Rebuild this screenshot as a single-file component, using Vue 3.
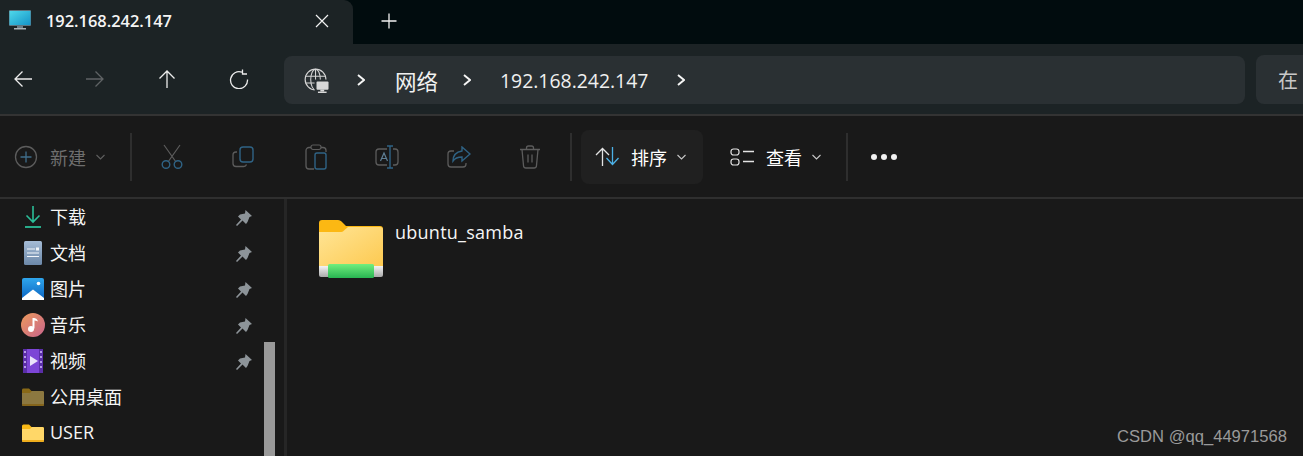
<script setup>
const items = [
  { name: '下载', icon: 'dl', pin: true },
  { name: '文档', icon: 'doc', pin: true },
  { name: '图片', icon: 'pic', pin: true },
  { name: '音乐', icon: 'music', pin: true },
  { name: '视频', icon: 'video', pin: true },
  { name: '公用桌面', icon: 'dim', pin: false },
  { name: 'USER', icon: 'folder', pin: false },
]
</script>

<template>
  <div class="win">
    <div class="tabstrip">
      <div class="tab">
        <svg class="pc" width="24" height="20" viewBox="0 0 24 20">
          <defs><linearGradient id="scr" x1="0" y1="0" x2="1" y2="1"><stop offset="0" stop-color="#4fd8ea"/><stop offset="1" stop-color="#1494c8"/></linearGradient></defs>
          <rect x="1" y="0" width="22" height="16" rx="1" fill="#5d7480"/>
          <rect x="1.500" y="1" width="21" height="14" fill="url(#scr)"/>
          <rect x="9" y="16" width="6" height="2" fill="#6b7c85"/>
          <rect x="6" y="18" width="12" height="1.500" fill="#a9b3b8"/>
        </svg>
        <span class="tabtitle">192.168.242.147</span>
        <svg class="tabx" width="14" height="14" viewBox="0 0 14 14"><path d="M1 1l12 12M13 1L1 13" stroke="#f2f2f2" stroke-width="1.200" fill="none"/></svg>
      </div>
      <svg class="plus" width="16" height="16" viewBox="0 0 16 16"><path d="M8 .5v15M.5 8h15" stroke="#f2f2f2" stroke-width="1.300" fill="none"/></svg>
    </div>

    <div class="navbar">
      <div class="navbtns">
        <svg width="20" height="20" viewBox="0 0 20 20"><path d="M19 10H2M9.500 2.500L2 10l7.500 7.500" stroke="#ececec" stroke-width="1.300" fill="none"/></svg>
        <svg width="20" height="20" viewBox="0 0 20 20"><path d="M1 10h17M10.500 2.500L18 10l-7.500 7.500" stroke="#5f6365" stroke-width="1.300" fill="none"/></svg>
        <svg width="20" height="20" viewBox="0 0 20 20"><path d="M10 19V2M2.500 9.500L10 2l7.500 7.500" stroke="#ececec" stroke-width="1.300" fill="none"/></svg>
        <svg width="20" height="20" viewBox="0 0 20 20"><path d="M13 3.200A8.500 8.500 0 1 0 18.500 10.500" stroke="#ececec" stroke-width="1.300" fill="none"/><path d="M13.500 .5v4.500h4.500" stroke="#ececec" stroke-width="1.300" fill="none"/></svg>
      </div>
      <div class="address">
        <svg class="globe" width="25" height="25" viewBox="0 0 26 26">
          <circle cx="12" cy="12" r="10.800" stroke="#d5d5d5" stroke-width="1.200" fill="none"/>
          <ellipse cx="12" cy="12" rx="5" ry="10.800" stroke="#d5d5d5" stroke-width="1.100" fill="none"/>
          <path d="M1.500 8.500h21M1.500 15.500h21M12 1v22" stroke="#d5d5d5" stroke-width="1.100" fill="none"/>
          <rect x="11" y="12" width="15" height="14" fill="#2a3033"/>
          <rect x="13" y="14" width="12.500" height="8.500" rx="1" fill="#d8d8d8"/>
          <rect x="17" y="22.500" width="4" height="2" fill="#d8d8d8"/>
          <rect x="14.500" y="24.500" width="9" height="1.500" fill="#d8d8d8"/>
        </svg>
        <svg class="chev first" width="8" height="12" viewBox="0 0 8 12"><path d="M1 1l6 5-6 5" stroke="#f5f5f5" stroke-width="1.900" fill="none"/></svg>
        <span class="net">网络</span>
        <svg class="chev" width="8" height="12" viewBox="0 0 8 12"><path d="M1 1l6 5-6 5" stroke="#f5f5f5" stroke-width="1.900" fill="none"/></svg>
        <span class="ip">192.168.242.147</span>
        <svg class="chev" width="8" height="12" viewBox="0 0 8 12"><path d="M1 1l6 5-6 5" stroke="#f5f5f5" stroke-width="1.900" fill="none"/></svg>
      </div>
      <div class="search">在</div>
    </div>

    <div class="toolbar">
      <div class="tnew">
        <svg width="24" height="24" viewBox="0 0 24 24"><circle cx="12" cy="12" r="10.500" stroke="#5c5c5c" stroke-width="1.300" fill="none"/><path d="M12 6.500v11M6.500 12h11" stroke="#3f6d8a" stroke-width="1.300" fill="none"/></svg>
        <span class="lbl dim">新建</span>
        <svg class="caret" width="9" height="6" viewBox="0 0 9 6"><path d="M.5 1l4 4 4-4" stroke="#5f5f5f" stroke-width="1.100" fill="none"/></svg>
      </div>
      <i class="sep"></i>
      <div class="actions">
        <svg width="22" height="26" viewBox="0 0 22 26"><path d="M3 1l12 17M19 1L7 18" stroke="#5c5c5c" stroke-width="1.200" fill="none"/><circle cx="5" cy="20.500" r="3.800" stroke="#2f6385" stroke-width="1.400" fill="none"/><circle cx="17" cy="20.500" r="3.800" stroke="#2f6385" stroke-width="1.400" fill="none"/></svg>
        <svg width="22" height="22" viewBox="0 0 22 22"><path d="M5 6H4a3 3 0 0 0-3 3v8.500a3 3 0 0 0 3 3h7.500a3 3 0 0 0 3-2" stroke="#5c5c5c" stroke-width="1.300" fill="none"/><rect x="8" y="1" width="13" height="15" rx="3" stroke="#2f6385" stroke-width="1.400" fill="none"/></svg>
        <svg class="paste" width="22" height="26" viewBox="0 0 22 26"><path d="M6 3.500H4a3 3 0 0 0-3 3V22a3 3 0 0 0 3 3h5M16 3.500h2a3 3 0 0 1 3 3V8" stroke="#5c5c5c" stroke-width="1.300" fill="none"/><rect x="6" y="1" width="10" height="4.500" rx="2" stroke="#5c5c5c" stroke-width="1.200" fill="none"/><rect x="10" y="9" width="11" height="16" rx="2" stroke="#2f6385" stroke-width="1.400" fill="none"/></svg>
        <svg class="rename" width="24" height="24" viewBox="0 0 24 24"><path d="M12 4H4a3 3 0 0 0-3 3v10a3 3 0 0 0 3 3h8M18 4h2a3 3 0 0 1 3 3v10a3 3 0 0 1-3 3h-2" stroke="#5c5c5c" stroke-width="1.300" fill="none"/><path d="M15 1v22M12 1h6M12 23h6" stroke="#2f6385" stroke-width="1.400" fill="none"/><path d="M5.500 16l3.500-8 3.500 8M6.800 13.500h4.500" stroke="#5f7f95" stroke-width="1.200" fill="none"/></svg>
        <svg class="share" width="24" height="22" viewBox="0 0 24 22"><path d="M7 5H4a3 3 0 0 0-3 3v10a3 3 0 0 0 3 3h12a3 3 0 0 0 3-3v-1" stroke="#5c5c5c" stroke-width="1.300" fill="none"/><path d="M15 1l8 7-8 7v-4c-4 0-7 1-9 4 0-6 3-9 9-10z" stroke="#2f6385" stroke-width="1.400" fill="none"/></svg>
        <svg class="trash" width="22" height="24" viewBox="0 0 22 24"><path d="M1 4.500h20M7.500 4.500V3a2 2 0 0 1 2-2h3a2 2 0 0 1 2 2v1.500M3 4.500l1.500 16a2.500 2.500 0 0 0 2.500 2.500h8a2.500 2.500 0 0 0 2.500-2.500l1.500-16M9 9.500v8M13 9.500v8" stroke="#5c5c5c" stroke-width="1.300" fill="none"/></svg>
      </div>
      <i class="sep s2"></i>
      <div class="sort">
        <svg width="25" height="19" viewBox="0 0 25 19"><path d="M7.500 19V1.500M1 8l6.500-6.500L14 8" stroke="#e3e3e3" stroke-width="1.300" fill="none"/><path d="M17.500 0v17.500M11.500 11l6 6.500 6-6.500" stroke="#4cb1e6" stroke-width="1.300" fill="none"/></svg>
        <span class="lbl">排序</span>
        <svg class="caret" width="9" height="6" viewBox="0 0 9 6"><path d="M.5 1l4 4 4-4" stroke="#c8c8c8" stroke-width="1.100" fill="none"/></svg>
      </div>
      <div class="view">
        <svg width="25" height="18" viewBox="0 0 25 18"><rect x="1" y="1" width="8" height="6" rx="2.500" stroke="#e3e3e3" stroke-width="1.200" fill="none"/><rect x="1" y="11" width="8" height="6" rx="2.500" stroke="#e3e3e3" stroke-width="1.200" fill="none"/><path d="M13 3.500h11M13 13.500h11" stroke="#e3e3e3" stroke-width="1.300" fill="none"/></svg>
        <span class="lbl">查看</span>
        <svg class="caret" width="9" height="6" viewBox="0 0 9 6"><path d="M.5 1l4 4 4-4" stroke="#c8c8c8" stroke-width="1.100" fill="none"/></svg>
      </div>
      <i class="sep s3"></i>
      <div class="more"><b></b><b></b><b></b></div>
    </div>

    <div class="body">
      <aside class="side">
        <div v-for="it in items" :key="it.name" class="row">
          <span class="ico">
            <svg v-if="it.icon === 'dl'" width="18" height="23" viewBox="0 0 18 23"><path d="M9 0v16M2.500 9.500L9 16l6.500-6.500" stroke="#2bbd98" stroke-width="1.600" fill="none"/><path d="M1 21h16" stroke="#2bbd98" stroke-width="1.800"/></svg>
            <svg v-else-if="it.icon === 'doc'" width="18" height="24" viewBox="0 0 18 24"><defs><linearGradient id="dg" x1="0" y1="0" x2="0" y2="1"><stop offset="0" stop-color="#a5bcd6"/><stop offset="1" stop-color="#6c88a8"/></linearGradient></defs><rect width="18" height="24" rx="1.500" fill="url(#dg)"/><path d="M3 8h8M3 12h12M3 15.500h12" stroke="#f1f5f9" stroke-width="1.200"/><rect x="12" y="6.500" width="3" height="3" fill="#f1f5f9"/></svg>
            <svg v-else-if="it.icon === 'pic'" width="22" height="22" viewBox="0 0 22 22"><defs><linearGradient id="pg" x1="0" y1="0" x2="0" y2="1"><stop offset="0" stop-color="#2fa6ec"/><stop offset="1" stop-color="#0a62c0"/></linearGradient></defs><rect width="22" height="22" rx="2" fill="url(#pg)"/><circle cx="16.500" cy="5.500" r="1.800" fill="#fff"/><path d="M0 20L11 11.500 22 20v2H0z" fill="#fff"/></svg>
            <svg v-else-if="it.icon === 'music'" width="24" height="24" viewBox="0 0 24 24"><defs><linearGradient id="mg" x1="0" y1="0" x2="1" y2="1"><stop offset="0" stop-color="#ec9a5c"/><stop offset="1" stop-color="#c8648c"/></linearGradient></defs><circle cx="12" cy="12" r="12" fill="url(#mg)"/><path d="M12.500 5v10.500" stroke="#fff" stroke-width="2"/><path d="M12.500 5c2 0 4 1 4.500 3.500-1.500-1-3-1-4.500-1z" fill="#fff"/><circle cx="10" cy="16" r="3" fill="#fff"/></svg>
            <svg v-else-if="it.icon === 'video'" width="20" height="24" viewBox="0 0 20 24"><rect width="20" height="24" rx="1.500" fill="#7c45d6"/><rect x="0" y="0" width="4" height="24" fill="#5a2ea8"/><rect x="16" y="0" width="4" height="24" fill="#5a2ea8"/><path d="M1 3h2M1 8h2M1 13h2M1 18h2M17 3h2M17 8h2M17 13h2M17 18h2" stroke="#b79be8" stroke-width="2"/><path d="M7 7v10l8-5z" fill="#e9e3fa"/></svg>
            <svg v-else width="22" height="18" viewBox="0 0 22 18" :class="{ dimf: it.icon === 'dim' }"><path d="M0 2a1.500 1.500 0 0 1 1.500-1.500h5.500l2.500 2.500H20.500A1.500 1.500 0 0 1 22 4.500V6H0z" fill="#f9b916"/><path d="M0 5h8l2-2h10.500A1.500 1.500 0 0 1 22 4.500V16.500A1.500 1.500 0 0 1 20.500 18h-19A1.500 1.500 0 0 1 0 16.500z" fill="#ffd768"/><path d="M0 16h22v.5a1.500 1.500 0 0 1-1.500 1.500h-19A1.500 1.500 0 0 1 0 16.500z" fill="#efae1d"/></svg>
          </span>
          <span class="name">{{ it.name }}</span>
          <svg v-if="it.pin" class="pin" width="16" height="16" viewBox="0 0 16 16"><path d="M9.500 0L16 6l-2.500 1-2 5-1.500 2-3.500-3.500L1 16l-1-1 5-5.500-3-3 2-2 5-1z" fill="#8d9499"/></svg>
        </div>
        <div class="thumb"></div>
      </aside>
      <main class="main">
        <div class="entry">
          <svg class="bigf" width="64" height="60" viewBox="0 0 64 60">
            <defs>
              <linearGradient id="fb" x1="0" y1="0" x2="1" y2="1"><stop offset="0" stop-color="#ffe596"/><stop offset="1" stop-color="#fdc94f"/></linearGradient>
              <linearGradient id="gb" x1="0" y1="0" x2="0" y2="1"><stop offset="0" stop-color="#72ee7e"/><stop offset="1" stop-color="#28b552"/></linearGradient>
              <linearGradient id="sb" x1="0" y1="0" x2="0" y2="1"><stop offset="0" stop-color="#f3f3f3"/><stop offset="1" stop-color="#a9a9a9"/></linearGradient>
            </defs>
            <path d="M0 4a3 3 0 0 1 3-3h16c2 0 3 1 4 2l4 4h34a3 3 0 0 1 3 3v6H0z" fill="#fcb813"/>
            <path d="M0 13h21c2 0 3-.5 4-1.500L29 8h32a3 3 0 0 1 3 3v38H0z" fill="url(#fb)"/>
            <path d="M0 47h64v9a2 2 0 0 1-2 2H2a2 2 0 0 1-2-2z" fill="url(#sb)"/>
            <rect x="9" y="45" width="46" height="14" rx="1.500" fill="url(#gb)"/>
          </svg>
          <span class="fname">ubuntu_samba</span>
        </div>
        <span class="mark">CSDN @qq_44971568</span>
      </main>
    </div>
  </div>
</template>

<style>
html, body { margin: 0; background: #191919; overflow: hidden; }
</style>

<style scoped>
.win { width: 1303px; height: 456px; overflow: hidden; display: flex; flex-direction: column; background: #191919; font-family: "Open Sans", "Noto Sans CJK SC", sans-serif; color: #fff; }
.tabstrip { height: 44px; flex: none; display: flex; align-items: center; background: #010c0e; }
.tab { width: 353px; height: 44px; box-sizing: border-box; display: flex; align-items: center; padding: 0 0 3px 8px; background: #1c2325; border-top-right-radius: 9px; }
.pc { flex: none; margin-top: -2px; }
.tabtitle { margin-left: 14px; font-size: 16.400px; font-weight: 600; color: #f5f5f5; }
.tabx { margin-left: auto; margin-right: 24px; }
.plus { margin-left: 28px; margin-bottom: 3px; }
.navbar { height: 72px; flex: none; box-sizing: border-box; display: flex; align-items: center; background: #1c2325; border-bottom: 2px solid #333; }
.navbtns { width: 284px; flex: none; box-sizing: border-box; padding-left: 13px; display: flex; gap: 52px; }
.address { width: 961px; height: 48px; margin-top: 2px; flex: none; box-sizing: border-box; display: flex; align-items: center; padding-left: 20px; background: #2a3033; border-radius: 8px; }
.globe { flex: none; }
.chev { flex: none; }
.chev.first { margin-left: 28px; }
.net { margin-left: 30px; margin-right: 25px; font-size: 21.500px; color: #f0f0f0; }
.ip { margin-left: 29px; margin-right: 29px; font-size: 19.400px; color: #f0f0f0; }
.search { flex: 1; height: 49px; margin-left: 11px; margin-top: 1px; padding-left: 22px; display: flex; align-items: center; background: #2a3033; border-radius: 8px 0 0 8px; font-size: 20px; color: #c8c8c8; }
.toolbar { height: 83px; flex: none; box-sizing: border-box; display: flex; align-items: center; padding-left: 14px; background: #191919; border-bottom: 2px solid #2f2f2f; }
.tnew { display: flex; align-items: center; width: 91px; flex: none; }
.lbl { font-size: 18px; }
.lbl.dim { margin-left: 12px; color: #6e6e6e; }
.caret { margin-left: 10px; flex: none; }
.sep { width: 2px; height: 48px; background: #2e2e2e; flex: none; margin-left: 25px; }
.sep.s2 { margin-left: 28px; }
.sep.s3 { margin-left: 0; }
.actions { display: flex; align-items: center; gap: 49px; margin-left: 29px; width: 381px; flex: none; }
.actions svg { flex: none; }
.paste { margin-left: 2px; }
.rename { margin-left: -1px; }
.share { margin-left: -1px; }
.trash { margin-left: -1px; }
.sort { width: 122px; height: 54px; margin-left: 9px; box-sizing: border-box; padding-left: 14px; display: flex; align-items: center; flex: none; background: #202020; border-radius: 8px; }
.sort .lbl, .view .lbl { margin-left: 11px; }
.view { display: flex; align-items: center; margin-left: 27px; width: 116px; flex: none; }
.more { display: flex; gap: 4px; margin-left: 23px; }
.more b { width: 6px; height: 6px; border-radius: 50%; background: #f0f0f0; }
.body { flex: 1; display: flex; min-height: 0; }
.side { position: relative; width: 287px; flex: none; box-sizing: border-box; border-right: 3px solid #262626; }
.row { height: 36px; display: flex; align-items: center; position: relative; }
.ico { width: 46px; flex: none; display: flex; justify-content: center; margin-left: 10px; margin-right: -6px; }
.name { font-size: 18px; margin-top: -2px; color: #f5f5f5; }
.pin { position: absolute; left: 236px; top: 11px; }
.dimf { opacity: .5; }
.thumb { position: absolute; left: 264px; top: 143px; width: 11px; height: 120px; background: #999; }
.main { position: relative; flex: 1; }
.entry { display: flex; align-items: flex-start; padding: 20px 0 0 32px; }
.bigf { flex: none; }
.fname { margin-left: 12px; margin-top: 1px; font-size: 18px; letter-spacing: .25px; color: #f5f5f5; }
.mark { position: absolute; right: 16px; bottom: 9px; font-family: "Liberation Sans", sans-serif; font-size: 16.600px; color: #9a9a9a; }
</style>
